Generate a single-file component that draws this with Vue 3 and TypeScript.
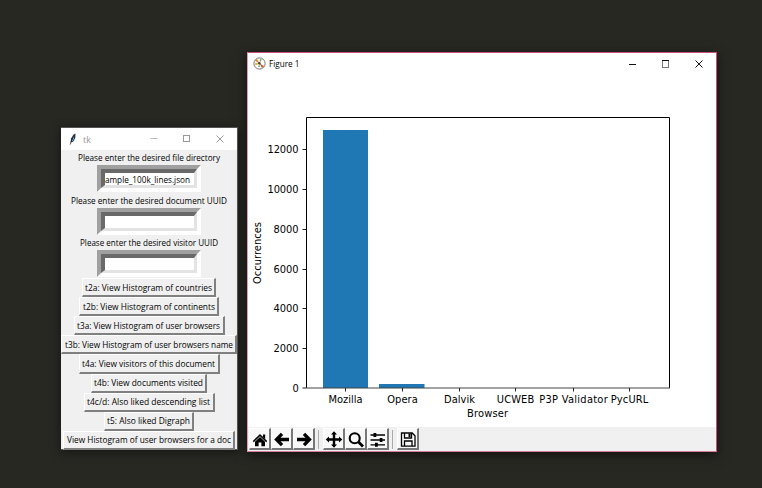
<script setup lang="ts">
interface Action { label: string; box: number; text: number }
interface Field { label: string; text: number; value: string }

const fields: Field[] = [
  { label: 'Please enter the desired file directory', text: 142, value: 'ample_100k_lines.json' },
  { label: 'Please enter the desired document UUID', text: 156, value: '' },
  { label: 'Please enter the desired visitor UUID', text: 138, value: '' },
]
const actions: Action[] = [
  { label: 't2a: View Histogram of countries', box: 134, text: 127 },
  { label: 't2b: View Histogram of continents', box: 140, text: 132 },
  { label: 't3a: View Histogram of user browsers', box: 151, text: 143 },
  { label: 't3b: View Histogram of user browsers name', box: 176, text: 168 },
  { label: 't4a: View visitors of this document', box: 141, text: 133 },
  { label: 't4b: View documents visited', box: 116, text: 109 },
  { label: 't4c/d: Also liked descending list', box: 131, text: 123 },
  { label: 't5: Also liked Digraph', box: 90, text: 83 },
  { label: 'View Histogram of user browsers for a doc', box: 172, text: 164 },
]
const yTicks = [0, 2000, 4000, 6000, 8000, 10000, 12000].map((v) => ({
  v, y: Math.round(388 - (v * 239) / 12000) + (v === 0 ? 0 : 0.5), w: v === 0 ? 6 : v < 10000 ? 25 : 31,
}))
const xTicks = [
  { label: 'Mozilla', x: 345.5, w: 34 },
  { label: 'Opera', x: 402.5, w: 30.5 },
  { label: 'Dalvik', x: 459.5, w: 31 },
  { label: 'UCWEB', x: 515.5, w: 37.5 },
  { label: 'P3P Validator', x: 573.5, w: 68.5 },
  { label: 'PycURL', x: 629.5, w: 37.5 },
]
</script>

<template>
  <main class="desktop">
    <section class="window tk">
      <header class="titlebar">
        <svg class="feather" width="10" height="14" viewBox="0 0 10 14">
          <path d="M2.5 11 L3 6.5 L5.5 2.5 L7.5 1.5 L7.3 6 L5 10 L3.5 10 Z" fill="#26394d" />
          <path d="M3.6 9 L5.4 5 L6 6.5 L4.6 9.4 Z" fill="#6ca5d8" />
          <path d="M2.2 12.5 L4.6 6" stroke="#111" stroke-width=".7" />
        </svg>
        <span class="title">tk</span>
        <svg class="controls" width="80" height="12" viewBox="0 0 80 12" fill="none" stroke="#999">
          <path d="M.5 5.5 H7.5" stroke="#bbb" /><rect x="33.5" y="2.5" width="6" height="6" /><path d="M66.5 2.5 L73.5 9.5 M73.5 2.5 L66.5 9.5" />
        </svg>
      </header>
      <form class="form" @submit.prevent>
        <div v-for="f in fields" :key="f.label" class="field">
          <svg class="caption" :width="f.text" height="15">
            <text x="0" y="11.2" :textLength="f.text" lengthAdjust="spacingAndGlyphs">{{ f.label }}</text>
          </svg>
          <div class="entry"><div class="entry-inner">
            <svg v-if="f.value" width="86" height="14">
              <text x="0" y="11" textLength="85" lengthAdjust="spacingAndGlyphs">{{ f.value }}</text>
            </svg>
          </div></div>
        </div>
        <div class="actions">
          <button v-for="a in actions" :key="a.label" type="button" class="action" :style="{ width: a.box + 'px' }">
            <svg :width="a.text" height="15">
              <text x="0" y="10.8" :textLength="a.text" lengthAdjust="spacingAndGlyphs">{{ a.label }}</text>
            </svg>
          </button>
        </div>
      </form>
    </section>

    <section class="window figure">
      <header class="titlebar">
        <svg class="logo" width="13" height="13" viewBox="0 0 13 13">
          <circle cx="6.5" cy="6.5" r="5.6" fill="#fff" stroke="#666" stroke-width=".9" />
          <path d="M6.5 6.5 L2 3.5 L4 2 Z" fill="#e0792c" /><path d="M6.5 6.5 L7 2 L9 2.6 Z" fill="#8fb35a" />
          <path d="M6.5 6.5 L2 6 L2.5 8.5 Z" fill="#d9b52c" /><path d="M6.5 6.5 L11 9 L9 11 Z" fill="#d2552b" />
          <path d="M6.5 6.5 L5 10 L7 10 Z" fill="#79b98a" /><circle cx="6.3" cy="6.2" r="1.3" fill="#4a4030" />
        </svg>
        <svg class="name" width="32" height="15"><text x="0" y="11" textLength="30.5" lengthAdjust="spacingAndGlyphs">Figure 1</text></svg>
        <svg class="controls" width="80" height="12" viewBox="0 0 80 12" fill="none" stroke="#111">
          <path d="M0 6.5 H7" /><rect x="33.5" y="2.5" width="6" height="7" stroke="#777" /><path d="M33 2.5 H40" /><path d="M66.5 2.5 L73.5 9.5 M73.5 2.5 L66.5 9.5" />
        </svg>
      </header>
      <svg class="chart" width="468" height="353" viewBox="248 74 468 353">
        <rect x="323" y="130" width="45" height="258" fill="#1f77b4" />
        <rect x="379" y="384" width="45.5" height="4" fill="#1f77b4" />
        <g stroke="#000" fill="none">
          <path d="M306.5 388 V117.5 H669.5 V388" />
          <path d="M306 388 H670" stroke="#444" />
          <path v-for="t in yTicks" :key="t.v" :d="`M302.5 ${t.y} H306`" stroke="#222" />
          <path v-for="t in xTicks" :key="t.label" :d="`M${t.x} 388 V391.5`" stroke="#222" />
        </g>
        <text v-for="t in yTicks" :key="t.v" :x="298.5 - t.w" :y="t.y + 3.8" :textLength="t.w">{{ t.v }}</text>
        <text v-for="t in xTicks" :key="t.label" :x="t.x - t.w / 2" y="403" :textLength="t.w">{{ t.label }}</text>
        <text x="467" y="417" textLength="41">Browser</text>
        <text x="0" y="0" textLength="62" transform="translate(260.5 284) rotate(-90)">Occurrences</text>
      </svg>
      <nav class="toolbar">
        <button class="tool"><svg viewBox="0 0 19 19">
          <path d="M2.8 12 L10 5 L17.2 12 L16.2 13.2 L10 7.2 L3.8 13.2 Z" /><path d="M5 12.8 L10 8 L15 12.8 V17.2 H11.4 V13.5 H8.6 V17.2 H5 Z M13 5.5 H15.2 V10 L13 8 Z" />
        </svg></button>
        <button class="tool"><svg viewBox="0 0 19 19"><path d="M10 4.8 L4.5 10.5 L10 16.2 M5 10.5 H17" class="arrow" /></svg></button>
        <button class="tool"><svg viewBox="0 0 19 19"><path d="M10 4.8 L15.5 10.5 L10 16.2 M3 10.5 H15" class="arrow" /></svg></button>
        <i class="separator" />
        <button class="tool"><svg viewBox="0 0 19 19"><path d="M10 2.2 L13 5.5 H11.2 V9.3 H15 V7.5 L18.3 10.5 L15 13.5 V11.7 H11.2 V15.5 H13 L10 18.8 L7 15.5 H8.8 V11.7 H5 V13.5 L1.7 10.5 L5 7.5 V9.3 H8.8 V5.5 H7 Z" /></svg></button>
        <button class="tool"><svg viewBox="0 0 19 19" class="line"><circle cx="8.7" cy="9.2" r="5" stroke-width="2.1" /><path d="M12.5 13 L17 17.5" stroke-width="2.8" /></svg></button>
        <button class="tool"><svg viewBox="0 0 19 19"><path d="M2.5 6 H17 M2.5 11 H17 M2.5 15.8 H17" class="rule" /><path d="M5.5 4 H8.3 V8 H5.5 Z M11.7 9 H14.5 V13 H11.7 Z M7 13.8 H9.8 V17.8 H7 Z" /></svg></button>
        <i class="separator" />
        <button class="tool"><svg viewBox="0 0 19 19" class="line"><path d="M3.5 4 H14.2 L17 6.8 V17.2 H3.5 Z M6.5 17 V12 H14 V17 M6.5 4 V9 H13.5 V4" stroke-width="1.3" /><path d="M11.5 4.5 V8" stroke-width="2" /></svg></button>
      </nav>
    </section>
  </main>
</template>

<style>
html, body { margin: 0; overflow: hidden; }
</style>

<style scoped>
* { box-sizing: border-box; }
.desktop { position: relative; width: 762px; height: 488px; background: #272822; overflow: hidden; }
.window { position: absolute; display: flex; flex-direction: column; font-family: "Open Sans", "Noto Sans", sans-serif; font-size: 9px; color: #000; }
.window svg { overflow: visible; }
.window text { font-family: "Open Sans", "Noto Sans", sans-serif; font-size: 9.2px; fill: #000; }
.tk { left: 61px; top: 127px; width: 177px; height: 323px; background: #f0f0f0; border: 1px solid #555; border-left: 0; box-shadow: 0 2px 9px rgba(0,0,0,.5); }
.figure { left: 247px; top: 52px; width: 470px; height: 400px; background: #fff; border: 1px solid #cc4d7d; border-left-color: #dd9db5; border-bottom-color: #d97b9c; box-shadow: 0 3px 11px rgba(0,0,0,.55); }
.titlebar { display: flex; flex: none; align-items: center; height: 22px; background: #fff; }
.feather { margin-left: 7px; }
.title { margin-left: 5px; color: #999; }
.tk .controls { margin-left: auto; margin-right: 7px; }
.figure .titlebar { height: 21px; }
.logo { margin-left: 5px; }
.name { margin-left: 3px; }
.figure .controls { margin-left: auto; margin-right: 7px; }
.form { display: flex; flex-direction: column; align-items: center; width: 176px; }
.field { display: flex; flex-direction: column; align-items: center; height: 42.7px; }
.caption { flex: none; }
.entry { width: 104px; height: 27px; flex: none; border: 4px solid; border-color: #a0a0a0 #fff #fff #a0a0a0; }
.entry-inner { height: 19px; background: #fff; border: 4px solid; border-color: #696969 #e3e3e3 #e3e3e3 #696969; border-right-width: 3px; border-bottom-width: 3px; display: flex; align-items: center; }
.entry-inner svg { flex: none; }
.actions { display: flex; flex-direction: column; align-items: center; }
.action { display: flex; align-items: center; justify-content: center; height: 19.1px; padding: 0; border: 2px solid; border-color: #fff #808080 #808080 #fff; border-top-width: 1px; border-left-width: 1px; background: #f0f0f0; }
.action svg { flex: none; }
.chart { flex: none; display: block; }
.chart text { font-family: "DejaVu Sans", sans-serif; font-size: 9.9px; }
.toolbar { display: flex; align-items: center; height: 24px; background: #f0f0f0; padding-left: 1px; }
.tool { width: 22px; height: 22px; flex: none; padding: 0; border: 1px solid; border-color: #fff #777 #777 #fff; border-right-width: 2px; border-bottom-width: 2px; background: #f8f8f8; }
.tool svg { display: block; width: 19px; height: 19px; }
.arrow { fill: none; stroke: #000; stroke-width: 3.3; }
.rule { stroke: #000; stroke-width: 1.3; }
.line { fill: none; stroke: #000; }
.separator { width: 1px; height: 19px; flex: none; margin: 0 4px 0 3px; background: #aaa; }
</style>
